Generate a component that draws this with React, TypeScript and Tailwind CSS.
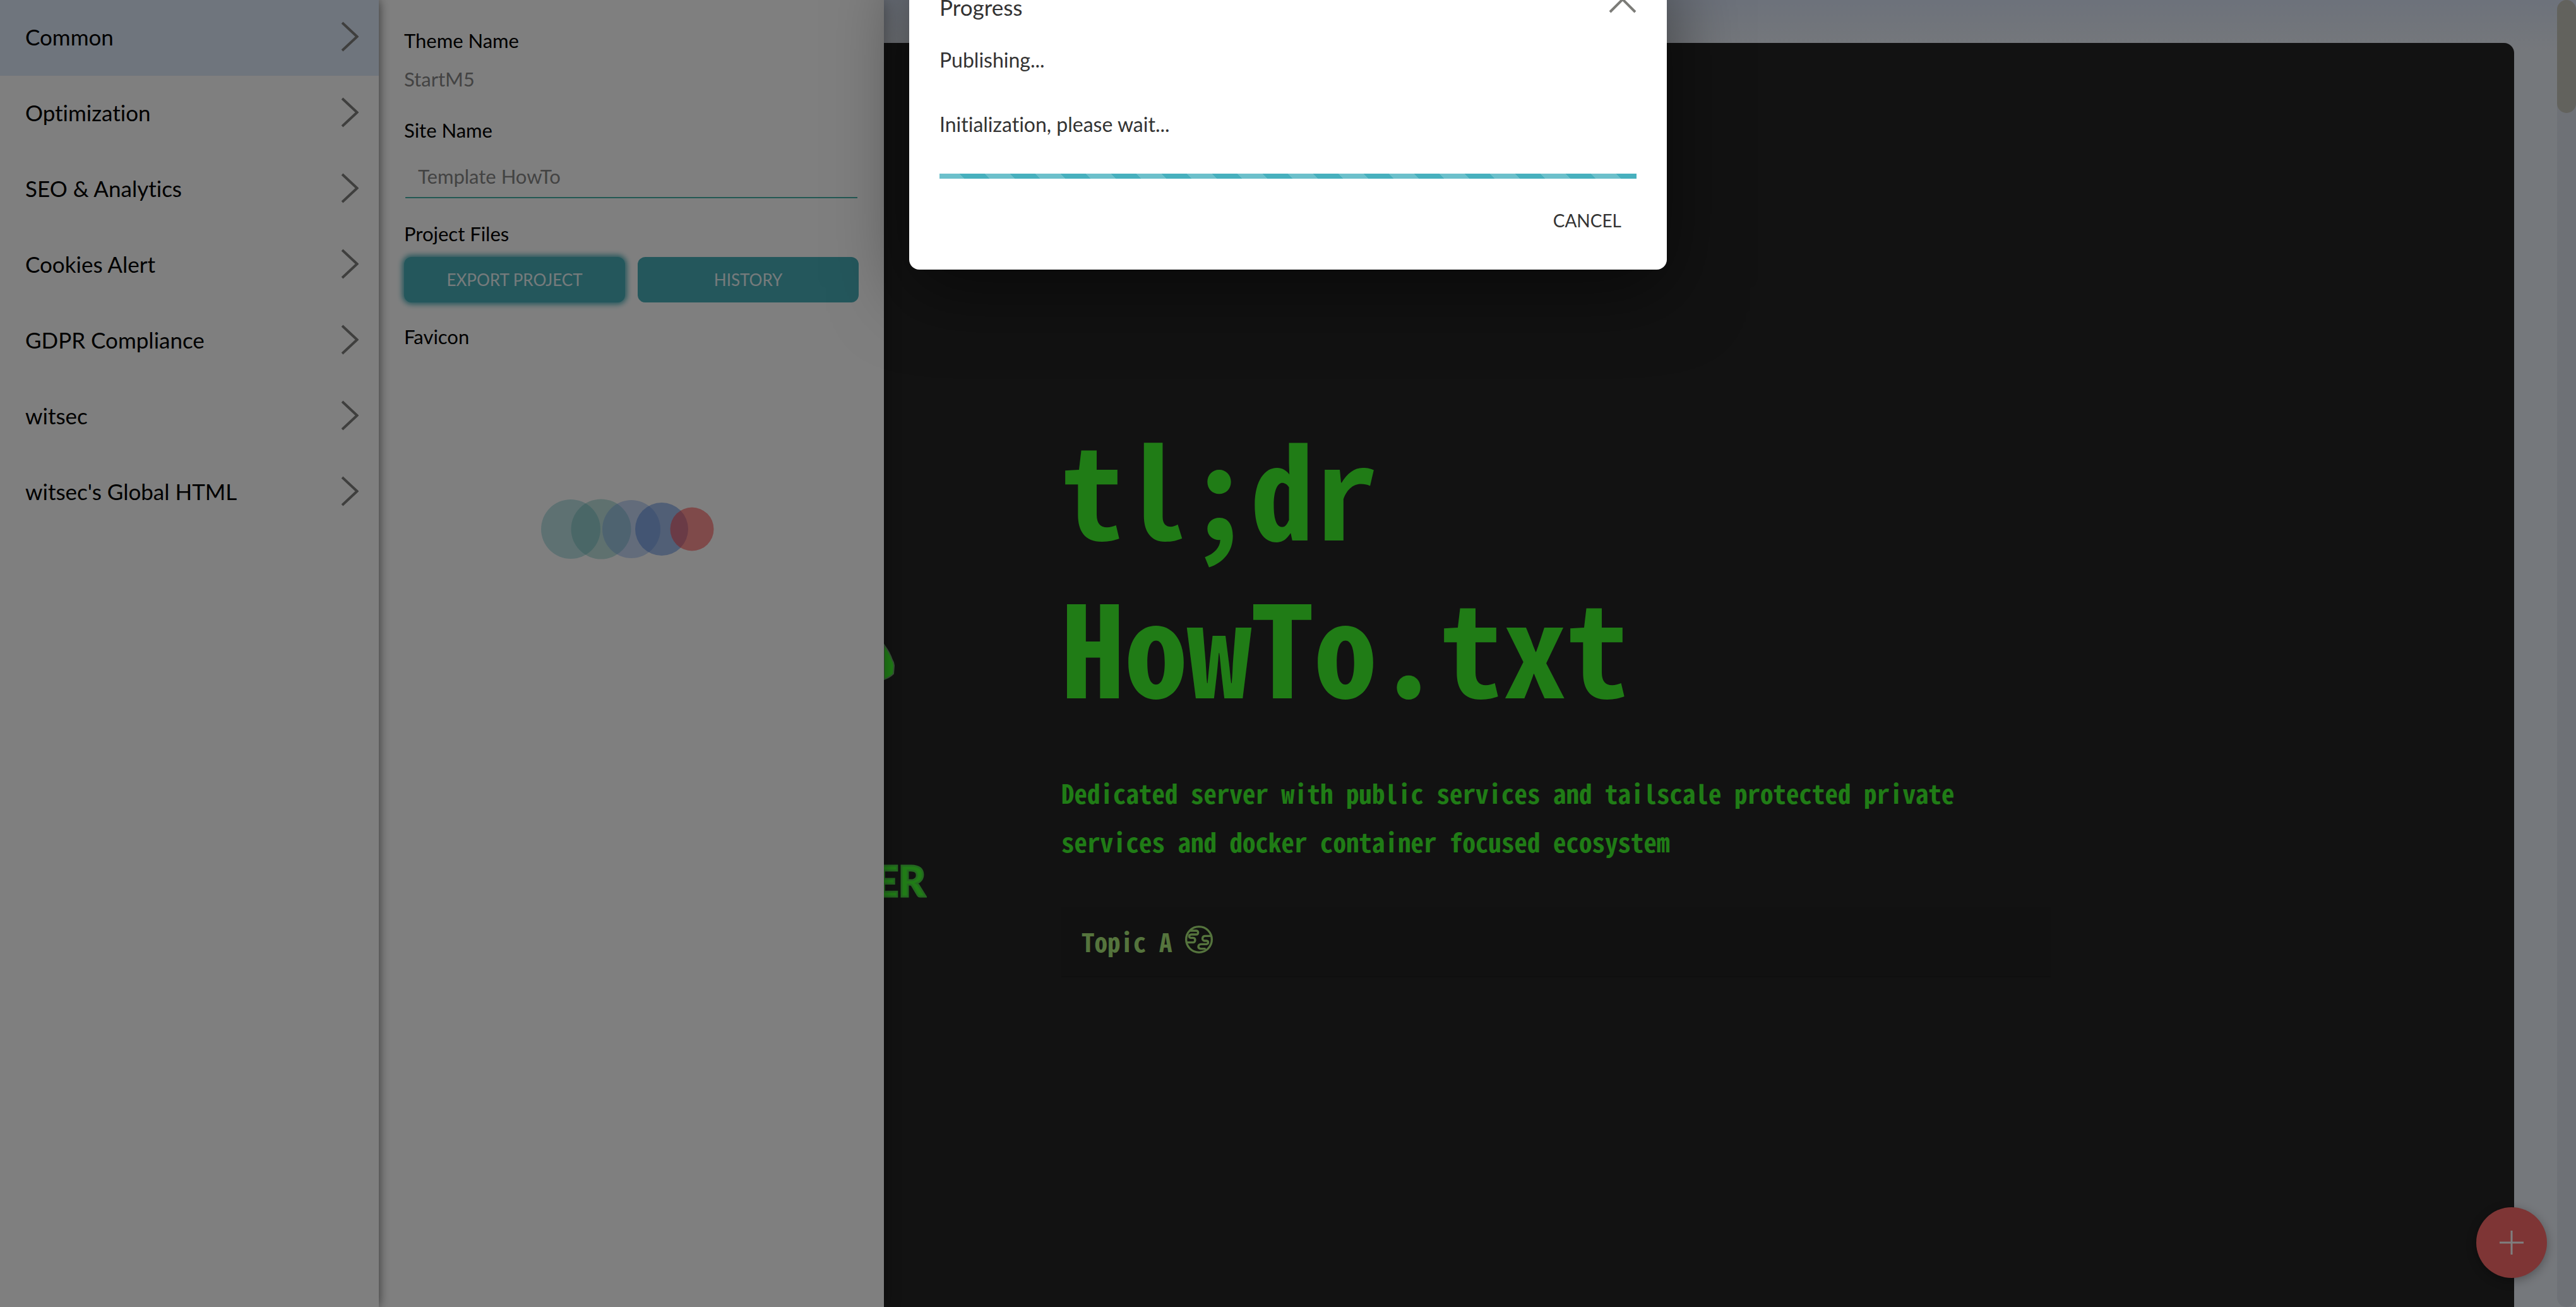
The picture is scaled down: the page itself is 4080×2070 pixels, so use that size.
import type { ReactNode } from 'react';

const menuItems = [
  'Common',
  'Optimization',
  'SEO & Analytics',
  'Cookies Alert',
  'GDPR Compliance',
  'witsec',
  "witsec's Global HTML",
];

function Chevron() {
  return (
    <svg viewBox="0 0 28 48" className="h-12 w-7 shrink-0" fill="none" stroke="#7e7e7c" strokeWidth="4" aria-hidden="true">
      <path d="M2 2 25.500 24 2 46" />
    </svg>
  );
}

function Sidebar() {
  return (
    <nav className="relative z-20 w-[600px] shrink-0 bg-white shadow-[0_0_16px_rgba(0,0,0,0.6)]">
      <ul>
        {menuItems.map((item, i) => (
          <li key={item}>
            <button
              type="button"
              className={
                i === 0
                  ? 'flex h-[120px] w-full items-center justify-between bg-[#dfeafa] pr-8 pb-1 pl-10 text-[35px] leading-[48px]'
                  : 'flex h-[120px] w-full items-center justify-between pr-8 pb-1 pl-10 text-[35px] leading-[48px]'
              }
            >
              {item}
              <Chevron />
            </button>
          </li>
        ))}
      </ul>
    </nav>
  );
}

function Heading({ children }: { children: ReactNode }) {
  return <h2 className="text-[31px] leading-[48px]">{children}</h2>;
}

function Loader() {
  return (
    <svg viewBox="0 0 400 100" className="mx-auto mt-[231px] h-[100px] w-[400px]" role="img" aria-label="Loading favicon">
      <circle cx="104" cy="50" r="47" fill="#48aeb8" fillOpacity="0.36" />
      <circle cx="152" cy="50" r="47.500" fill="#4bb0a5" fillOpacity="0.36" />
      <circle cx="200" cy="50" r="46" fill="#6496e6" fillOpacity="0.36" />
      <circle cx="248" cy="50" r="42" fill="#3f78d8" fillOpacity="0.48" />
      <circle cx="296" cy="50" r="34.500" fill="#ff3c3c" fillOpacity="0.54" />
    </svg>
  );
}

function SettingsPanel() {
  return (
    <section className="relative z-10 flex w-[800px] shrink-0 flex-col bg-white px-10 pt-10 shadow-[0_0_24px_rgba(0,0,0,0.4)]">
      <Heading>Theme Name</Heading>
      <p className="mt-[13px] text-[31px] leading-[48px] text-[#868686]">StartM5</p>
      <label htmlFor="site-name" className="mt-[33px] text-[31px] leading-[48px]">
        Site Name
      </label>
      <input
        id="site-name"
        type="text"
        defaultValue="Template HowTo"
        className="mx-0.5 mt-4 h-[68px] border-b-2 border-[#46b3a9] bg-transparent px-5 text-[31px] leading-[48px] text-[#868686] outline-none"
      />
      <div className="mt-8">
        <Heading>Project Files</Heading>
      </div>
      <div className="mt-[13px] grid grid-cols-2 gap-5">
        <button
          type="button"
          className="h-[72px] rounded-xl bg-[#48aeb8] text-[26px] leading-10 text-white/90 shadow-[0_0_8px_3px_#48aeb8]"
        >
          EXPORT PROJECT
        </button>
        <button type="button" className="h-[72px] rounded-xl bg-[#48aeb8] text-[26px] leading-10 text-white/90">
          HISTORY
        </button>
      </div>
      <div className="mt-[30px]">
        <Heading>Favicon</Heading>
      </div>
      <Loader />
    </section>
  );
}

function GlobeIcon() {
  return (
    <svg viewBox="0 0 132 132" className="mb-1 h-11 w-11" fill="none" stroke="currentColor" strokeWidth="10" strokeLinecap="round" aria-hidden="true">
      <circle cx="66" cy="66" r="61" />
      <path d="M26 24H52C64 24 66 42 53 42H30C16 43 16 58 28 58H38C52 59 50 80 38 80H8" />
      <path d="M120 49H96C80 49 78 70 92 72H102C112 73 112 86 102 88H76C60 89 58 108 74 110H94" />
    </svg>
  );
}

function Preview() {
  return (
    <main className="flex min-w-0 flex-1 bg-[linear-gradient(#dae4f6_0px,#ebf0f8_80px)] pt-[68px] pr-[98px]">
      <div className="flex flex-1 rounded-tr-2xl bg-[#242424] font-['Noto_Sans_Mono_CJK_SC','DejaVu_Sans_Mono',monospace] font-bold text-[#40f82c]">
        <div className="flex w-[68px] shrink-0 flex-col items-end overflow-hidden">
          <svg viewBox="0 0 68 60" className="mt-[950px] h-[60px] w-[68px]" aria-hidden="true">
            <path d="M0 3 Q9 15 13 27 L15 31 16 36 15 49 Q9 55 0 58Z" fill="#40f82c" stroke="#6fa56f" strokeWidth="2" />
          </svg>
          <span className="mt-[277px] pr-0.5 font-[Lato,sans-serif] text-[66px] leading-[80px] font-black text-[#40f82c] [-webkit-text-stroke:3px_#48d040]">
            ER
          </span>
        </div>
        <div className="mt-[576px] ml-[213px] w-[1567px]">
          <h1 className="text-[200px] leading-[250px]">
            tl;dr
            <br />
            HowTo.txt
          </h1>
          <p className="mt-[73px] text-[41px] leading-[77px]">
            Dedicated server with public services and tailscale protected private services and docker container focused
            ecosystem
          </p>
          <a
            href="#topic-a"
            className="mt-[66px] flex h-[111px] items-center gap-5 border-b-2 border-[#1e1e1e] bg-[#222222] px-8 pb-1 text-[41px] leading-[60px] text-[#aae87a]"
          >
            Topic A
            <GlobeIcon />
          </a>
        </div>
      </div>
    </main>
  );
}

function ProgressDialog() {
  return (
    <div className="absolute inset-0 z-40 flex items-start justify-center overflow-hidden bg-black/50">
      <div
        role="dialog"
        aria-labelledby="dialog-title"
        className="-mt-[61px] w-[1200px] rounded-2xl bg-white px-12 pt-12 pb-[58px] text-[#333333] shadow-[0_30px_120px_rgba(0,0,0,0.5)]"
      >
        <div className="flex h-12 items-center justify-between">
          <h2 id="dialog-title" className="text-[35px] leading-[48px]">
            Progress
          </h2>
          <button type="button" aria-label="Close" className="pb-6">
            <svg viewBox="0 0 44 44" className="h-11 w-11" fill="none" stroke="#7c7c78" strokeWidth="4" aria-hidden="true">
              <path d="M2 2 42 42M42 2 2 42" />
            </svg>
          </button>
        </div>
        <p className="mt-9 text-[32px] leading-[48px]">Publishing...</p>
        <p className="mt-[54px] text-[32px] leading-[48px]">Initialization, please wait...</p>
        <div
          role="progressbar"
          aria-label="Publishing"
          className="mt-[54px] h-2 bg-[#47b0be] bg-[linear-gradient(45deg,#ffffff33_25%,transparent_25%,transparent_50%,#ffffff33_50%,#ffffff33_75%,transparent_75%)] bg-[length:80px_80px] bg-[position:-8px_0px]"
        />
        <div className="mt-[46px] flex justify-end">
          <button type="button" className="px-6 text-[28px] leading-10">
            CANCEL
          </button>
        </div>
      </div>
    </div>
  );
}

export default function App() {
  return (
    <div className="relative flex min-h-screen overflow-hidden bg-[#ebf0f8] font-[Lato,sans-serif] text-black [font-variant-ligatures:none]">
      <Sidebar />
      <SettingsPanel />
      <Preview />
      <div className="absolute inset-y-0 right-0 z-10 w-[30px] rounded-full bg-[#dce2ec]">
        <div className="h-[179px] rounded-full bg-[#c5c4bb]" />
      </div>
      <button
        type="button"
        aria-label="Add block"
        className="absolute right-[46px] bottom-[46px] z-20 flex h-28 w-28 items-center justify-center rounded-full bg-[#fc6a6a] shadow-[0_4px_16px_rgba(0,0,0,0.3)]"
      >
        <svg viewBox="0 0 38 38" className="h-[38px] w-[38px]" stroke="#ffffff" strokeWidth="3" aria-hidden="true">
          <path d="M19 0V38M0 19H38" />
        </svg>
      </button>
      <ProgressDialog />
    </div>
  );
}
